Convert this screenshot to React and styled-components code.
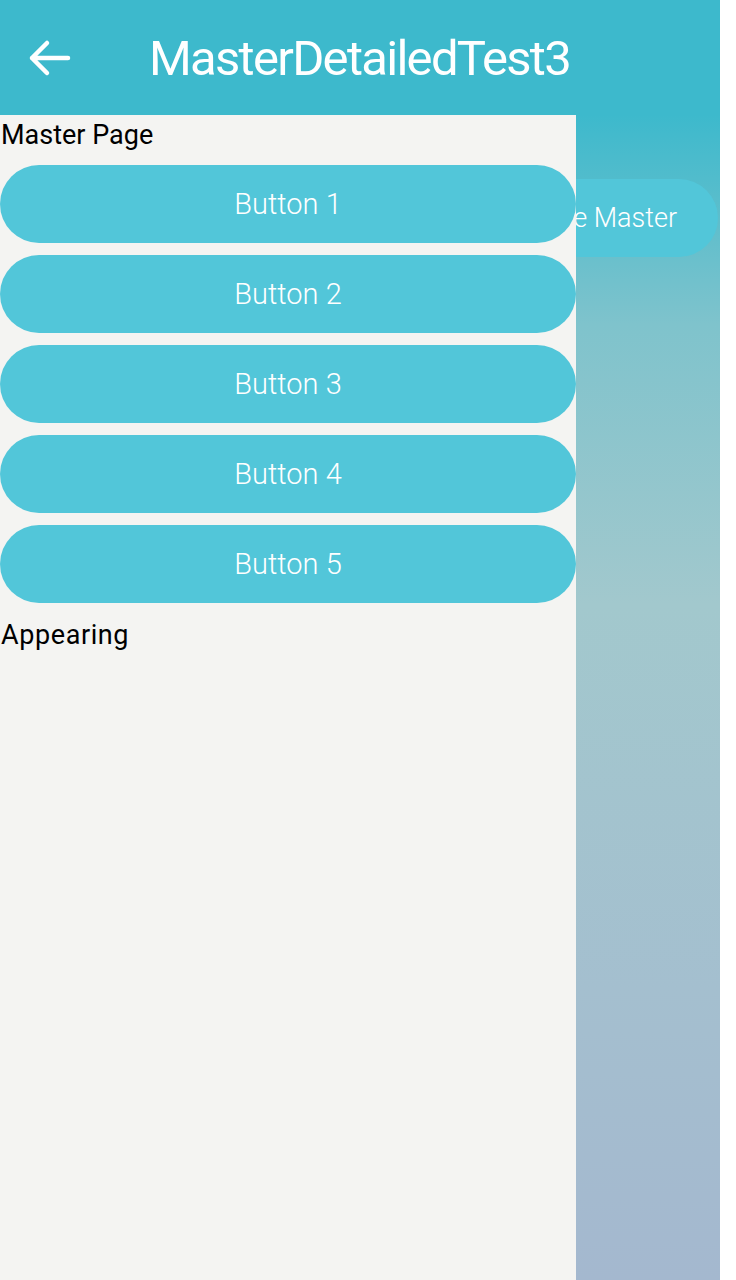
import React from 'react'
import styled, { createGlobalStyle } from 'styled-components'

const GlobalStyle = createGlobalStyle`
    html, body {
        margin: 0;
        padding: 0;
        background: #ffffff;
    }
    body {
        font-family: Roboto, "Open Sans", sans-serif;
    }
`

const buttons = ['Button 1', 'Button 2', 'Button 3', 'Button 4', 'Button 5']

const App = () => {
  return (
    <>
      <GlobalStyle />
      <Screen>
        <Header>
          <BackButton type="button" aria-label="Back">
            <svg width="44" height="40" viewBox="0 0 44 40" fill="none">
              <path d="M41 19 H5 M20 4 L5 19 L20 34" stroke="#ffffff" strokeWidth="4.5" strokeLinecap="round" strokeLinejoin="round" />
            </svg>
          </BackButton>
          <Title>MasterDetailedTest3</Title>
        </Header>
        <Body>
          <Detail>
            <DetailButton type="button">Hide Master</DetailButton>
          </Detail>
          <Master>
            <Label>Master Page</Label>
            <List>
              {buttons.map((b) => (
                <PillButton key={b} type="button">{b}</PillButton>
              ))}
            </List>
            <Label $wide>Appearing</Label>
          </Master>
        </Body>
      </Screen>
    </>
  )
}

export default App

const Screen = styled.div`
    width: 720px;
    height: 1280px;
    display: flex;
    flex-direction: column;
    overflow: hidden;
`
const Header = styled.header`
    height: 115px;
    flex: 0 0 115px;
    background: #3db9cc;
    display: flex;
    align-items: center;
    padding-left: 27px;
    box-sizing: border-box;
`
const BackButton = styled.button`
    background: transparent;
    border: none;
    padding: 0;
    width: 44px;
    height: 40px;
    display: flex;
    align-items: center;
    justify-content: center;
    margin-right: 78px;
    margin-top: 2px;
`
const Title = styled.h1`
    margin: 0;
    margin-top: 2px;
    color: #ffffff;
    font-family: Roboto, sans-serif;
    font-weight: 400;
    font-size: 49px;
    letter-spacing: -1.7px;
`
const Body = styled.div`
    position: relative;
    flex: 1;
`
const Detail = styled.div`
    height: 100%;
    background: linear-gradient(to bottom, #3db9cc 0%, #7fc3cc 18%, #a2c8cd 42%, #a4bfcf 75%, #a4b8cf 100%);
    display: flex;
    flex-direction: column;
    align-items: flex-end;
    padding-top: 64px;
    padding-right: 2px;
    box-sizing: border-box;
`
const DetailButton = styled.button`
    width: 260px;
    height: 78px;
    border: none;
    border-radius: 39px;
    background: #52c6d9;
    color: #ffffff;
    font-family: Roboto, sans-serif;
    font-weight: 300;
    font-size: 27px;
    text-align: right;
    padding-right: 41px;
`
const Master = styled.aside`
    position: absolute;
    left: 0;
    top: 0;
    bottom: 0;
    width: 576px;
    background: #f4f4f2;
    display: flex;
    flex-direction: column;
`
const Label = styled.div`
    font-family: Roboto, sans-serif;
    font-size: 27px;
    letter-spacing: ${p => (p.$wide ? '0.6px' : '0')};
    color: #000000;
    line-height: 40px;
    height: 44px;
    padding-left: 1px;
    box-sizing: border-box;
`
const List = styled.div`
    display: flex;
    flex-direction: column;
    gap: 12px;
    margin-top: 6px;
    margin-bottom: 12px;
`
const PillButton = styled.button`
    width: 576px;
    height: 78px;
    border: none;
    border-radius: 39px;
    background: #52c6d9;
    color: #ffffff;
    font-family: Roboto, sans-serif;
    font-weight: 300;
    font-size: 29px;
    padding: 0;
`
